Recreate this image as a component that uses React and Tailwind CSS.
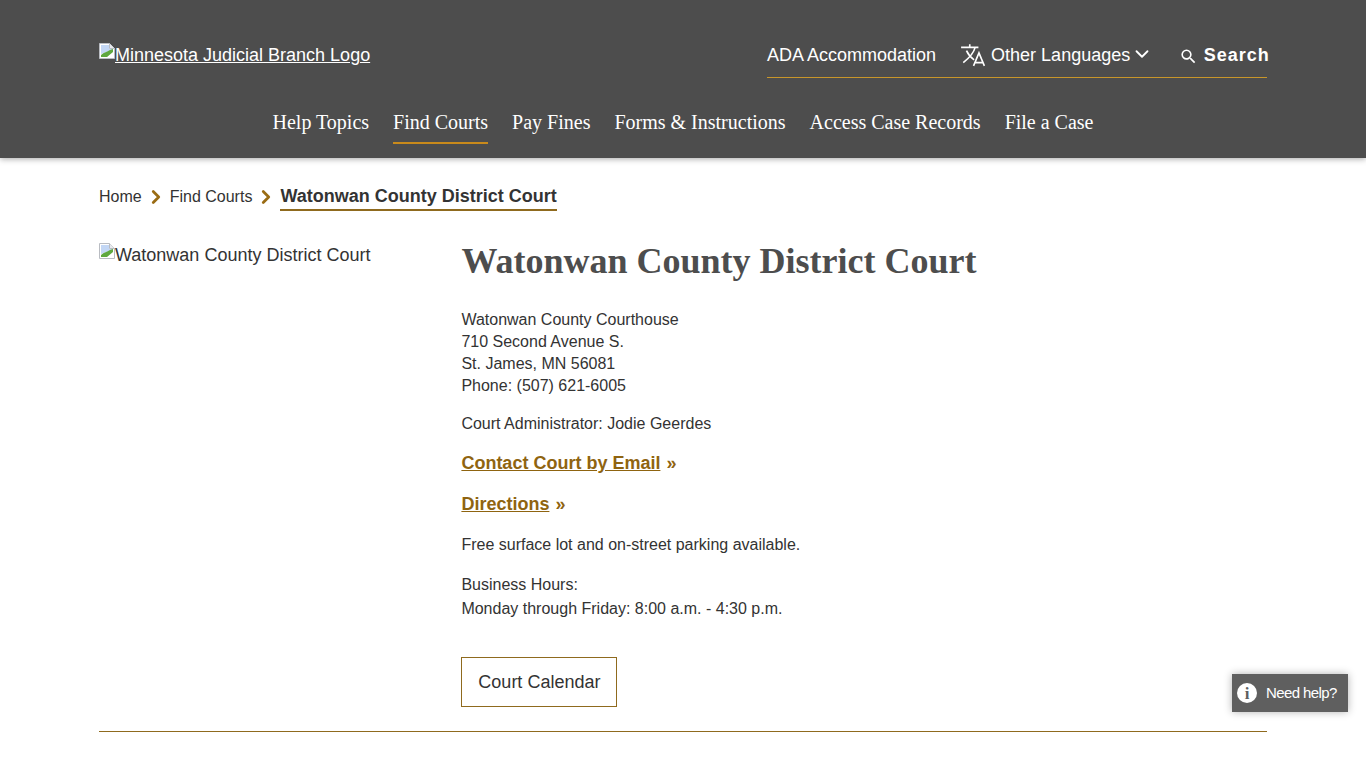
import React from 'react';
import { ChevronDown, ChevronRight } from 'lucide-react';

const NAV = ['Help Topics', 'Find Courts', 'Pay Fines', 'Forms & Instructions', 'Access Case Records', 'File a Case'];

// browser's broken image placeholder
const BrokenImage = () => (
  <svg width="16" height="16" viewBox="0 0 16 16" className="shrink-0 self-start">
    <path d="M0.5 0.5H10.5L15.5 5.5V15.5H0.5Z" fill="#fff" stroke="#b9bcc2" />
    <path d="M10.5 0.5V5.500H15.5" fill="#e8eaed" stroke="#b9bcc2" />
    <path d="M2 2H10V6H14V7L2 11Z" fill="#c3d7f5" />
    <path d="M2 14V12C5 9 8 9 11 7L14 6V9L8 14Z" fill="#5fa83f" />
  </svg>
);

const TranslateIcon = () => (
  <svg width="26" height="26" viewBox="0 0 24 24" fill="none" stroke="currentColor" strokeWidth="1.5" className="ml-[24px] -mt-[1px] shrink-0">
    <path d="M1 5h16M9 2v3M14 5c-1 4-4.500 9-11 14M6 8c1.500 3.500 3.500 6 7 8.500" />
    <path d="M12.500 22L17.500 10L22.500 22M14 19h7" />
  </svg>
);

const SearchIcon = () => (
  <svg width="19" height="19" viewBox="0 0 24 24" fill="currentColor" className="ml-[26px] mt-[4px] shrink-0">
    <path d="M15.500 14h-.79l-.28-.27A6.471 6.471 0 0 0 16 9.500 6.500 6.500 0 1 0 9.500 16c1.610 0 3.090-.59 4.230-1.570l.27.28v.79l5 4.990L20.490 19l-4.990-5zm-6 0C7.010 14 5 11.990 5 9.500S7.010 5 9.500 5 14 7.010 14 9.500 11.990 14 9.500 14z" />
  </svg>
);

const App = () => {
  return (
    <div className="relative min-h-[768px] bg-white text-[#333] font-['Liberation_Sans',Arial,sans-serif] overflow-hidden">
      {/* Header */}
      <header className="h-[158px] bg-[#4d4d4d] shadow-[0_1px_6px_rgba(0,0,0,0.35)] px-[99px] pt-[43px]">
        <div className="flex justify-between">
          <a className="flex items-start h-6 text-[18px] leading-6 text-white underline">
            <BrokenImage />
            <span>Minnesota Judicial Branch Logo</span>
          </a>
          <div className="w-[500px] h-[35px] flex items-start border-b border-[#c8962a] text-white text-[18px] leading-6 whitespace-nowrap">
            <span>ADA Accommodation</span>
            <TranslateIcon />
            <span className="ml-[5px]">Other Languages</span>
            <ChevronDown size={22} strokeWidth={2} className="ml-[1px] shrink-0" />
            <SearchIcon />
            <span className="ml-[5.500px] font-bold tracking-[1px]">Search</span>
          </div>
        </div>
        <nav className="flex justify-center gap-6 mt-[32px] font-['Liberation_Serif','Times_New_Roman',serif] text-[20px] leading-6 text-white">
          {NAV.map((label) => (
            <a key={label} className={`pb-[8px] border-b-2 ${label === 'Find Courts' ? 'border-[#c98a1b]' : 'border-transparent'}`}>
              {label}
            </a>
          ))}
        </nav>
      </header>

      <main className="px-[99px]">
        {/* Breadcrumb */}
        <div className="flex items-start pt-[28px] text-[16px] leading-[22px] h-[86px]">
          <span>Home</span>
          <ChevronRight size={22} strokeWidth={3} className="mx-[3px] text-[#9a6c14] shrink-0" />
          <span>Find Courts</span>
          <ChevronRight size={22} strokeWidth={3} className="ml-[3px] text-[#9a6c14] shrink-0" />
          <span className="ml-[3px] -mt-[1px] h-[26px] font-bold text-[18px] border-b-2 border-[#8f6a1e]">Watonwan County District Court</span>
        </div>

        <div className="flex items-start">
          <div className="w-[362.400px] flex text-[18px] leading-6 -mt-[1px]">
            <BrokenImage />
            <span>Watonwan County District Court</span>
          </div>
          <div className="flex-1">
            <h1 className="font-['Liberation_Serif','Times_New_Roman',serif] font-bold text-[36px] leading-10 text-[#4d4d4d] -mt-[3px]">
              Watonwan County District Court
            </h1>
            <p className="mt-[28px] text-[16px] leading-[22px]">
              Watonwan County Courthouse<br />
              710 Second Avenue S.<br />
              St. James, MN 56081<br />
              Phone: (507) 621-6005
            </p>
            <p className="mt-[16px] text-[16px] leading-[22px]">Court Administrator: Jodie Geerdes</p>
            <p className="mt-[16px] text-[18px] leading-6 font-bold text-[#8f6410]">
              <a className="underline">Contact Court by Email</a> <span className="ml-[1px]">»</span>
            </p>
            <p className="mt-[17px] text-[18px] leading-6 font-bold text-[#8f6410]">
              <a className="underline">Directions</a> <span className="ml-[1px]">»</span>
            </p>
            <p className="mt-[18px] text-[16px] leading-[22px]">Free surface lot and on-street parking available.</p>
            <p className="mt-[17px] text-[16px] leading-6">
              Business Hours:<br />
              Monday through Friday: 8:00 a.m. - 4:30 p.m.
            </p>
            <a className="mt-[36px] inline-flex items-center justify-center w-[156px] h-[50px] border border-[#8f6a1e] text-[18px]">
              Court Calendar
            </a>
          </div>
        </div>
        <div className="mt-[24px] border-t border-[#8f6a1e]" />
      </main>

      {/* Help widget */}
      <div className="absolute left-[1232px] top-[674px] w-[116px] h-[38px] bg-[#5f5f5f] shadow-[0_0_8px_rgba(0,0,0,0.3)] flex items-center pl-[5px] text-white">
        <span className="w-5 h-5 rounded-full bg-white text-[#5f5f5f] flex items-center justify-center font-bold font-['Liberation_Serif',serif] text-[17px] leading-none">
          i
        </span>
        <span className="ml-[9px] text-[15px] tracking-[-0.6px]">Need help?</span>
      </div>
    </div>
  );
};

export default App;
